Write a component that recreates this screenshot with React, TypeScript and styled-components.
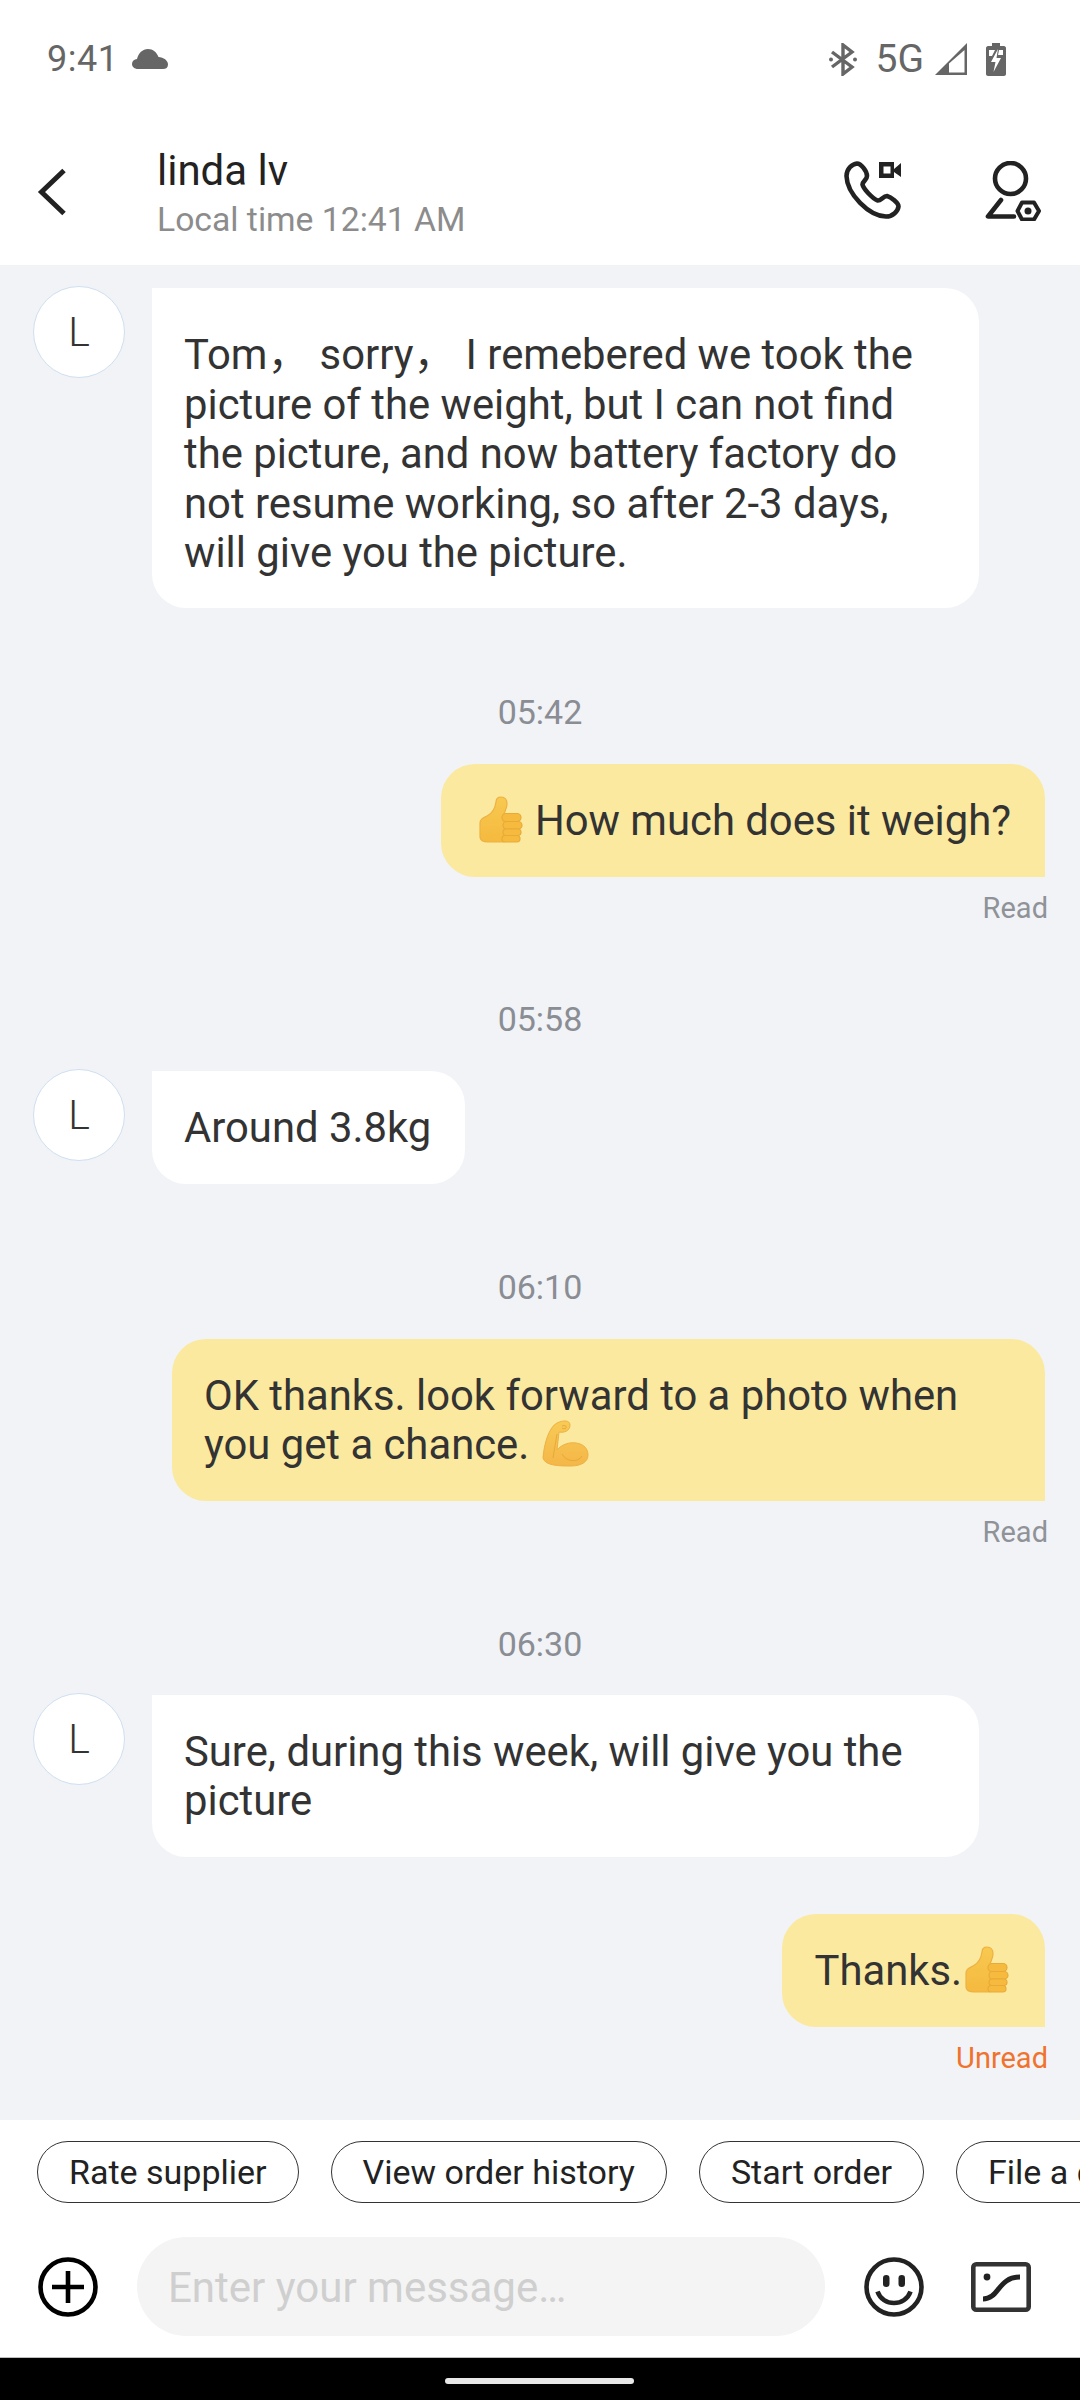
import React from "react";
import styled, { createGlobalStyle } from "styled-components";

const GlobalStyle = createGlobalStyle`
  html, body {
    margin: 0;
    padding: 0;
    background: #fff;
  }
  * {
    box-sizing: border-box;
  }
`;

const Screen = styled.div`
  width: 1080px;
  height: 2400px;
  display: flex;
  flex-direction: column;
  overflow: hidden;
  font-family: Roboto, "Noto Sans CJK SC", sans-serif;
  color: #333;
`;

const StatusBar = styled.div`
  height: 117px;
  padding: 39px 74px 0 47px;
  display: flex;
  justify-content: space-between;
  align-items: flex-start;
  color: #666;
`;

const StatusGroup = styled.div`
  display: flex;
  align-items: center;
  height: 40px;
`;

const StatusTime = styled.span`
  font-size: 36px;
  line-height: 40px;
  letter-spacing: 0.5px;
  margin-right: 14px;
`;

const NetworkLabel = styled.span`
  font-size: 39px;
  line-height: 40px;
  margin: 0 11px 0 19px;
`;

const SignalGap = styled.span`
  width: 19px;
`;

const Header = styled.header`
  height: 148px;
  display: flex;
  align-items: flex-start;
  padding-left: 37px;
`;

const BackButton = styled.div`
  width: 120px;
  padding-top: 51px;
`;

const HeaderTitle = styled.div`
  flex: 1;
  padding-top: 30px;
`;

const ContactName = styled.div`
  font-size: 42px;
  line-height: 48px;
  color: #222;
`;

const LocalTime = styled.div`
  font-size: 33.7px;
  line-height: 40px;
  margin-top: 5px;
  color: #8c8c8c;
`;

const HeaderActions = styled.div`
  display: flex;
  padding: 44px 39px 0 0;
  gap: 83px;
`;

const Chat = styled.main`
  flex: 1;
  min-height: 0;
  background: #f1f3f7;
  padding-top: 21px;
  display: flex;
  flex-direction: column;
`;

const IncomingRow = styled.div<{ $top?: number }>`
  display: flex;
  align-items: flex-start;
  padding-left: 33px;
  gap: 27px;
  margin-top: ${(p) => p.$top ?? 0}px;
`;

const Avatar = styled.div`
  width: 92px;
  height: 92px;
  flex: none;
  border-radius: 50%;
  background: #fff;
  border: 1px solid #cfdff0;
  display: flex;
  align-items: center;
  justify-content: center;
  font-size: 41px;
  font-weight: 300;
  color: #333;
`;

const IncomingBubble = styled.div<{ $wide?: boolean; $padTop?: number; $padBottom?: number; $line?: number }>`
  margin-top: 2px;
  background: #fff;
  border-radius: 0 34px 34px 34px;
  font-size: 41.8px;
  line-height: ${(p) => p.$line ?? 49}px;
  padding: ${(p) => p.$padTop ?? 32}px 34px ${(p) => p.$padBottom ?? 32}px 32px;
  width: ${(p) => (p.$wide ? "827px" : "auto")};
`;

const OutgoingRow = styled.div<{ $top?: number }>`
  display: flex;
  justify-content: flex-end;
  padding-right: 35px;
  margin-top: ${(p) => p.$top ?? 33}px;
`;

const OutgoingBubble = styled.div`
  background: #fbe99f;
  border-radius: 34px 34px 0 34px;
  font-size: 41.8px;
  line-height: 49px;
  padding: 32px 34px 32px 32px;
  max-width: 873px;
`;

const Receipt = styled.div<{ $unread?: boolean }>`
  text-align: right;
  padding-right: 32px;
  margin-top: 13px;
  font-size: 29px;
  line-height: 36px;
  color: ${(p) => (p.$unread ? "#f0722c" : "#8f9297")};
`;

const TimeLabel = styled.div<{ $top: number }>`
  text-align: center;
  font-size: 34px;
  line-height: 40px;
  color: #8a8d93;
  margin-top: ${(p) => p.$top}px;
`;

const Emoji = styled.svg<{ $left?: number; $right?: number }>`
  display: inline-block;
  vertical-align: -8px;
  margin: 0 ${(p) => p.$right ?? 0}px 0 ${(p) => p.$left ?? 0}px;
`;

const BottomPanel = styled.div`
  height: 237px;
  background: #fff;
  padding-top: 21px;
  overflow: hidden;
`;

const ChipRow = styled.div`
  display: flex;
  gap: 32px;
  padding-left: 37px;
  width: 1300px;
`;

const Chip = styled.div`
  height: 62px;
  padding: 0 31px;
  flex: none;
  display: flex;
  align-items: center;
  border: 1.5px solid #333;
  border-radius: 31px;
  font-size: 34px;
  color: #222;
`;

const Composer = styled.div`
  display: flex;
  align-items: center;
  margin-top: 34px;
  padding-left: 38px;
`;

const InputBox = styled.div`
  width: 688px;
  height: 99px;
  margin-left: 39px;
  margin-right: 39px;
  padding: 2px 0 0 31px;
  display: flex;
  align-items: center;
  border-radius: 50px;
  background: #f4f4f4;
  font-size: 42px;
  color: #cfcfcf;
`;

const PictureButton = styled.div`
  margin-left: 47px;
  display: flex;
`;

const NavBar = styled.div`
  height: 43px;
  background: #000;
  border-top: 1px solid #bdbdbd;
  display: flex;
  justify-content: center;
  padding: 20px 2px 0 0;
`;

const HomeIndicator = styled.div`
  width: 189px;
  height: 6px;
  border-radius: 3px;
  background: #e8e8e8;
`;

function ThumbsUp({ left }: { left: number }) {
  return (
    <Emoji $left={left} $right={2} width="44" height="47" viewBox="0 0 44 47">
      <defs>
        <linearGradient id="thumbFill" x1="0" y1="0" x2="0" y2="1">
          <stop offset="0" stopColor="#f8c950" />
          <stop offset="1" stopColor="#f5b93f" />
        </linearGradient>
      </defs>
      <path
        d="M1 27C1 23 4 22 8 20C12 18 16 13 17 6C17 3 19 1 22 1C26 1 28 4 28 8C28 12 26 15 25 18L25 46L9 46C4 46 1 44 1 41Z"
        fill="url(#thumbFill)"
        stroke="#eeb143"
        strokeWidth="1.2"
      />
      <g fill="#f6bb3e" stroke="#e8ab38" strokeWidth="1.2">
        <rect x="23" y="17.5" width="19" height="8" rx="4" />
        <rect x="24" y="25.5" width="19" height="7.5" rx="3.7" />
        <rect x="24" y="33" width="18" height="6.5" rx="3.2" />
        <rect x="23" y="39.5" width="18" height="6.5" rx="3.2" />
      </g>
    </Emoji>
  );
}

function Muscle() {
  return (
    <Emoji $left={2} width="47" height="47" viewBox="0 0 47 47">
      <defs>
        <linearGradient id="armFill" x1="0" y1="0" x2="0" y2="1">
          <stop offset="0" stopColor="#f8cb55" />
          <stop offset="1" stopColor="#f4b648" />
        </linearGradient>
      </defs>
      <path
        d="M1 38C2 24 7 7 15 3C21 0 28 0 28 5C28 11 22 13 17 12L15 30C20 24 28 22 34 23C42 24 46 29 46 35C46 42 39 46 29 46C18 46 3 46 1 38Z"
        fill="url(#armFill)"
        stroke="#eeb143"
        strokeWidth="1"
      />
      <path
        d="M20 6C23 5 25 6 24 8C23 9 21 9 20 8M15 14L11 38M20 34C24 42 36 43 40 36"
        fill="none"
        stroke="#e6a93a"
        strokeWidth="1"
      />
    </Emoji>
  );
}

function CloudIcon() {
  return (
    <svg width="36" height="20" viewBox="0 0 36 20" fill="#666">
      <path d="M6 20C2.5 20 0 17.8 0 15C0 12.2 2.2 10.4 5 10C6.4 4.2 10.5 0 16 0C21 0 24.6 3 26.5 8C31.5 8.3 36 11.5 36 15.5C36 18.5 34 20 31 20Z" />
    </svg>
  );
}

function BluetoothIcon() {
  return (
    <svg width="28" height="33" viewBox="0 0 28 33">
      <path d="M3 9L23 24L14 31V2L23 9L3 24" fill="none" stroke="#666" strokeWidth="3.4" />
      <circle cx="2" cy="16.5" r="2" fill="#666" />
      <circle cx="26" cy="16.5" r="2" fill="#666" />
    </svg>
  );
}

function SignalIcon() {
  return (
    <svg width="32" height="33" viewBox="0 0 32 33">
      <path d="M32 0V32H0Z" fill="#666" />
      <path d="M29.5 7V29.5H14V20.5Z" fill="#fff" />
    </svg>
  );
}

function BatteryIcon() {
  return (
    <svg width="20" height="33" viewBox="0 0 20 33">
      <path d="M6 0H14V3H18C19 3 20 4 20 5V31C20 32 19 33 18 33H2C1 33 0 32 0 31V5C0 4 1 3 2 3H6Z" fill="#666" />
      <path d="M3 7H9L6 13H3ZM13 7H17V12H12Z" fill="#fff" />
      <path d="M12 6L5 19H9.5L7.5 29L15 15H10.5Z" fill="#fff" />
    </svg>
  );
}

function BackIcon() {
  return (
    <svg width="30" height="48" viewBox="0 0 30 48">
      <path d="M27 2.5L4.5 24L27 45.5" fill="none" stroke="#222" strokeWidth="5" />
    </svg>
  );
}

function VideoCallIcon() {
  return (
    <svg width="58" height="58" viewBox="0 0 58 58">
      <path
        d="M13 2.5C8 3 2.5 8 2.5 15C3 33 25 55 42 55.5C49 55.5 54 50 54.5 45.5C54.5 42 47 36 43 35C39 35 37 40 33.5 39.5C28 37 19.5 28 18.5 23.5C18.5 20 23 19 23 15C23 10 17 2.5 13 2.5Z"
        fill="none"
        stroke="#222"
        strokeWidth="4.6"
        strokeLinejoin="round"
      />
      <path d="M35 1H50V8L57 2V16L50 11V17H35Z" fill="#222" />
      <rect x="39.5" y="5.5" width="7" height="7" fill="#fff" />
    </svg>
  );
}

function ContactSettingsIcon() {
  return (
    <svg width="56" height="60" viewBox="0 0 56 60">
      <circle cx="25.5" cy="17.5" r="15.5" fill="none" stroke="#222" strokeWidth="4.6" />
      <path d="M16 39L3 55.5H29" fill="none" stroke="#222" strokeWidth="4.6" strokeLinecap="round" strokeLinejoin="round" />
      <path d="M37 41.5H49L54 50L49 58.5H37L32.5 50Z" fill="none" stroke="#222" strokeWidth="4" strokeLinejoin="round" />
      <circle cx="43" cy="50" r="3.5" fill="#222" />
    </svg>
  );
}

function PlusIcon() {
  return (
    <svg width="60" height="60" viewBox="0 0 60 60">
      <circle cx="30" cy="30" r="27.5" fill="none" stroke="#000" strokeWidth="4.6" />
      <path d="M30 14V46M14 30H46" fill="none" stroke="#000" strokeWidth="4.6" />
    </svg>
  );
}

function SmileIcon() {
  return (
    <svg width="60" height="60" viewBox="0 0 60 60">
      <circle cx="30" cy="30" r="27.5" fill="none" stroke="#222" strokeWidth="4.6" />
      <rect x="19" y="18" width="6.5" height="12" rx="3.2" fill="#222" />
      <rect x="34.5" y="18" width="6.5" height="12" rx="3.2" fill="#222" />
      <path d="M13.5 34.5C16 42 23 46 30 46C37 46 44 42 46.5 34.5" fill="none" stroke="#222" strokeWidth="4.6" />
    </svg>
  );
}

function PictureIcon() {
  return (
    <svg width="60" height="50" viewBox="0 0 60 50">
      <rect x="2.3" y="2.3" width="55.4" height="45.4" rx="3" fill="none" stroke="#333" strokeWidth="4.6" />
      <circle cx="16" cy="15" r="3.4" fill="#222" />
      <path d="M12 37C28 37 27 15 49 15" fill="none" stroke="#222" strokeWidth="5" />
    </svg>
  );
}

export default function App() {
  return (
    <Screen>
      <GlobalStyle />
      <StatusBar>
        <StatusGroup>
          <StatusTime>9:41</StatusTime>
          <CloudIcon />
        </StatusGroup>
        <StatusGroup>
          <BluetoothIcon />
          <NetworkLabel>5G</NetworkLabel>
          <SignalIcon />
          <SignalGap />
          <BatteryIcon />
        </StatusGroup>
      </StatusBar>
      <Header>
        <BackButton>
          <BackIcon />
        </BackButton>
        <HeaderTitle>
          <ContactName>linda lv</ContactName>
          <LocalTime>Local time 12:41 AM</LocalTime>
        </HeaderTitle>
        <HeaderActions>
          <VideoCallIcon />
          <ContactSettingsIcon />
        </HeaderActions>
      </Header>
      <Chat>
        <IncomingRow>
          <Avatar>L</Avatar>
          <IncomingBubble $wide $padTop={42} $padBottom={30} $line={49.5}>
            Tom， sorry， I remebered we took the picture of the weight, but I can not find the picture, and now battery
            factory do not resume working, so after 2-3 days, will give you the picture.
          </IncomingBubble>
        </IncomingRow>
        <TimeLabel $top={84}>05:42</TimeLabel>
        <OutgoingRow $top={32}>
          <OutgoingBubble>
            <ThumbsUp left={6} /> How much does it weigh?
          </OutgoingBubble>
        </OutgoingRow>
        <Receipt>Read</Receipt>
        <TimeLabel $top={73}>05:58</TimeLabel>
        <IncomingRow $top={30}>
          <Avatar>L</Avatar>
          <IncomingBubble>Around 3.8kg</IncomingBubble>
        </IncomingRow>
        <TimeLabel $top={83}>06:10</TimeLabel>
        <OutgoingRow $top={32}>
          <OutgoingBubble>
            OK thanks. look forward to a photo when you get a chance. <Muscle />
          </OutgoingBubble>
        </OutgoingRow>
        <Receipt>Read</Receipt>
        <TimeLabel $top={74}>06:30</TimeLabel>
        <IncomingRow $top={29}>
          <Avatar>L</Avatar>
          <IncomingBubble $wide>Sure, during this week, will give you the picture</IncomingBubble>
        </IncomingRow>
        <OutgoingRow $top={57}>
          <OutgoingBubble>
            Thanks.
            <ThumbsUp left={3} />
          </OutgoingBubble>
        </OutgoingRow>
        <Receipt $unread>Unread</Receipt>
      </Chat>
      <BottomPanel>
        <ChipRow>
          <Chip>Rate supplier</Chip>
          <Chip>View order history</Chip>
          <Chip>Start order</Chip>
          <Chip>File a dispute</Chip>
        </ChipRow>
        <Composer>
          <PlusIcon />
          <InputBox>Enter your message…</InputBox>
          <SmileIcon />
          <PictureButton>
            <PictureIcon />
          </PictureButton>
        </Composer>
      </BottomPanel>
      <NavBar>
        <HomeIndicator />
      </NavBar>
    </Screen>
  );
}
